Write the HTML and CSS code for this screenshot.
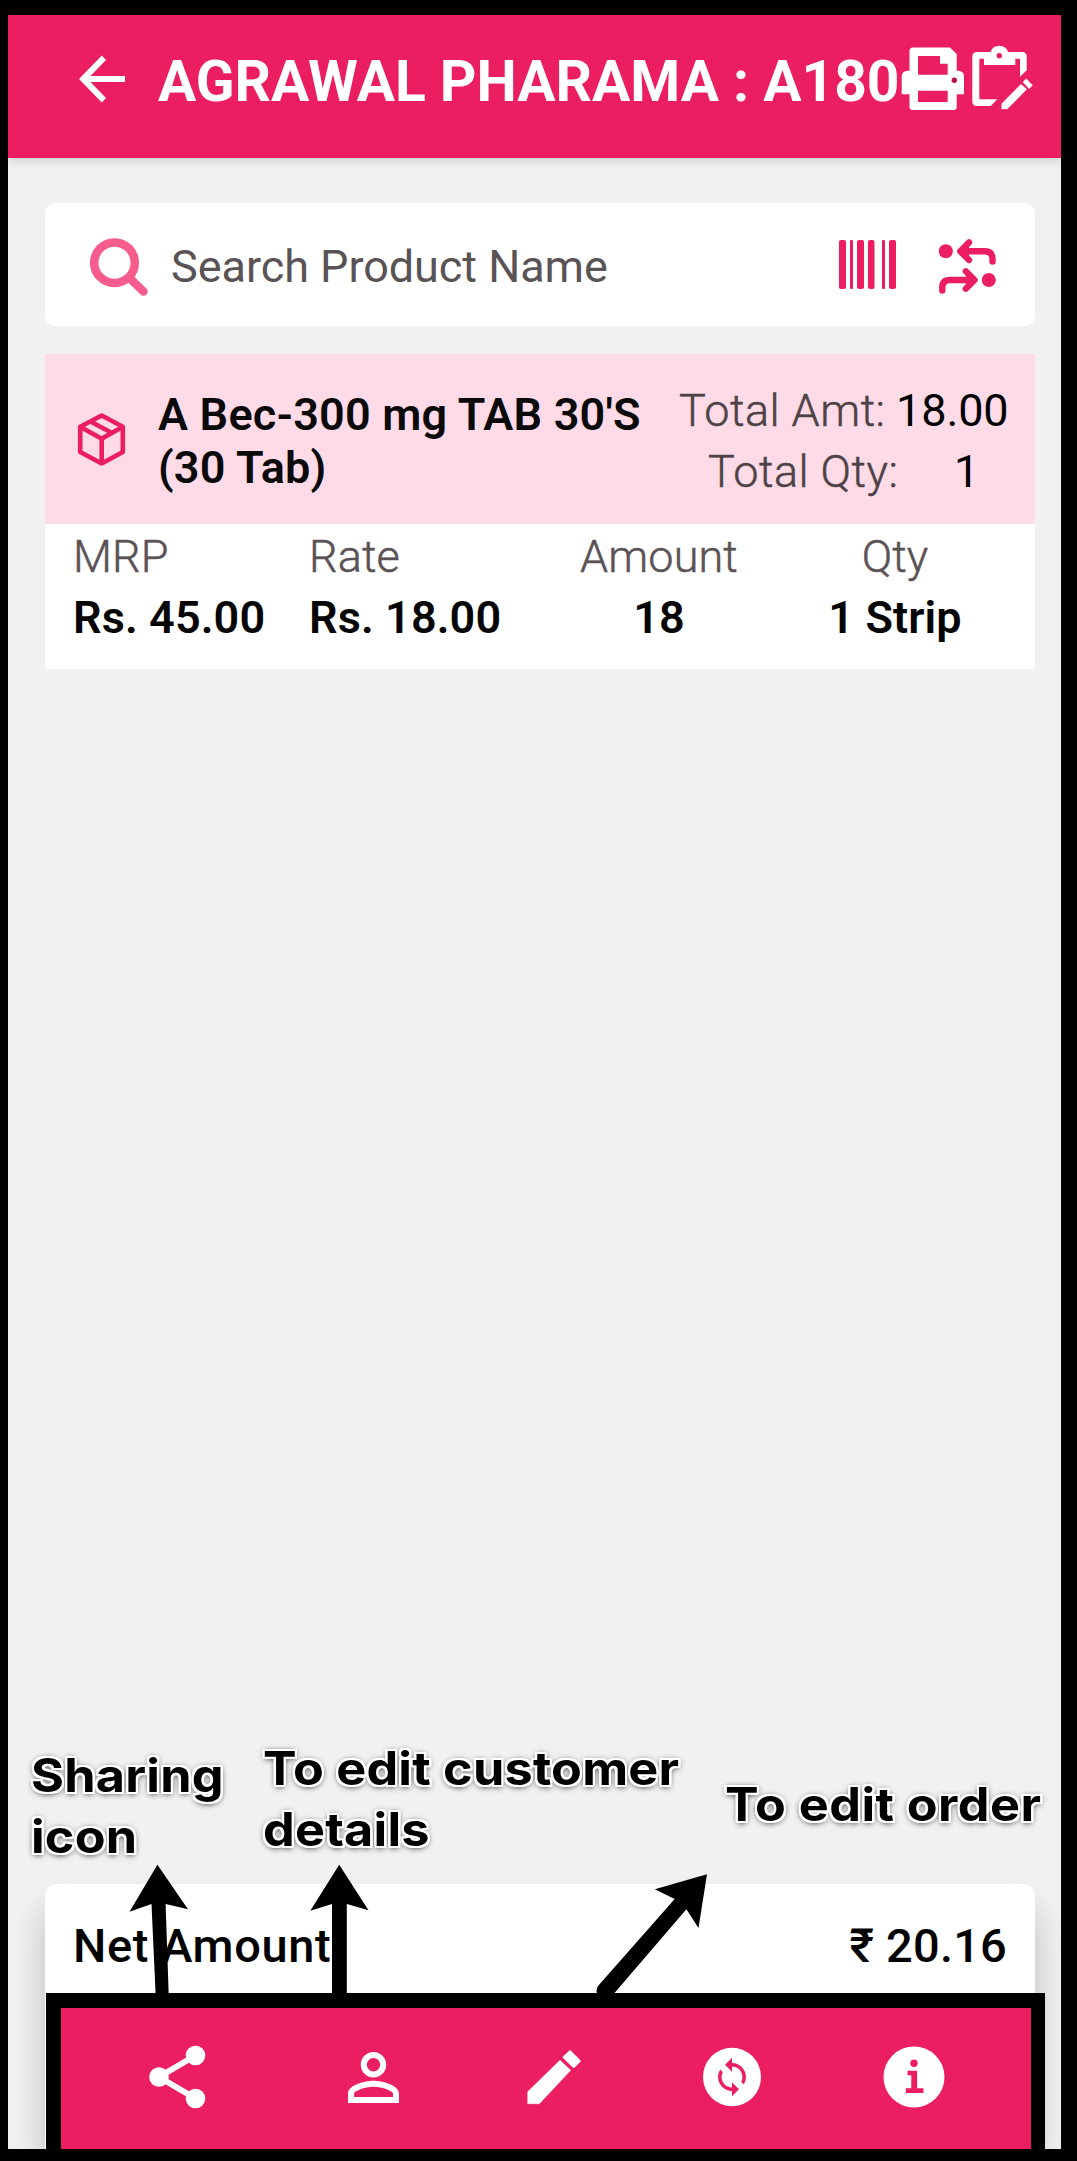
FILE: index.html
```
<!DOCTYPE html>
<html lang="en">
<head>
<meta charset="utf-8">
<title>Order details</title>
<link rel="stylesheet" href="styles.css">
</head>
<body>
<div class="frame">
  <div class="screen">
    <header class="topbar">
      <svg class="back" viewBox="79 55 46 48" width="46" height="48"><path d="M125 76v6H90.500L106 98l-4.200 4.500L79 79l22.800-23.500L106 60 90.500 76z" fill="#fff"/></svg>
      <h1 class="title">AGRAWAL PHARAMA : A180</h1>
      <svg class="print" viewBox="901 46 64 65" width="64" height="65">
        <path fill="#fff" fill-rule="evenodd" d="M913 47.500h37l6.700 6.500v16.700h1.300q6 0 6 6v17.600h-7.300V107q0 3-3 3H913q-3.500 0-3.500-3V94.300h-7.800V77q0-6.300 6.300-6.300h1.500V51q0-3.500 3.500-3.500zM918 56v18.700h29.700v-11H940V56zM918 90.700V102h29.700V90.700z"/>
        <circle cx="954.3" cy="80.300" r="2.700" fill="#b5124a"/>
      </svg>
      <svg class="clip" viewBox="972 44 62 66" width="62" height="66">
        <path fill="#fff" fill-rule="evenodd" d="M977 51h13.500a9.300 9.300 0 0 1 17.600 0H1022q4.700 0 4.700 4.500v13.800l-6.700 6.400v-18h-4.700V64H984v-6.300h-4.700v40.600h18l-6.600 6.700H977q-4.700 0-4.700-4.500v-45Q972.300 51 977 51zM999.300 52a2.700 2.700 0 1 0 0 5.400 2.700 2.700 0 0 0 0-5.400z"/>
        <path fill="#fff" d="M1001.700 102.700l19.300-19.400 5.700 5-19.400 19.700h-5.600zM1022.900 80.900l3.300-3.200 6.300 6.600-3.400 3.400z" stroke="#fff" stroke-width=".4"/>
      </svg>
    </header>

    <main class="content">
      <div class="search">
        <svg class="glass" viewBox="90 237 60 60" width="60" height="60" fill="none" stroke="#f65c8c"><circle cx="114.500" cy="262.700" r="20.300" stroke-width="8.500"/><path d="M131 279.500l12.500 12" stroke-width="8.500" stroke-linecap="round"/></svg>
        <span class="placeholder">Search Product Name</span>
        <svg viewBox="839 240 57 49" width="57" height="49" fill="#ec1e62"><rect x="839" y="240" width="7" height="49" rx="2"/><rect x="850" y="240" width="3" height="49" rx="1"/><rect x="857" y="240" width="7" height="49" rx="2"/><rect x="868" y="240" width="6.500" height="49" rx="2"/><rect x="882" y="240" width="3" height="49" rx="1"/><rect x="889" y="240" width="7" height="49" rx="2"/></svg>
        <svg class="swap" viewBox="938 237 60 58" width="60" height="58" fill="none" stroke="#ec1e62" stroke-width="6.400" stroke-linecap="round" stroke-linejoin="round"><circle cx="945.800" cy="250.300" r="7" fill="#ec1e62" stroke="none"/><path d="M969 241.500l-8.700 8.800 8.700 8.700M962 250.300h23q7.500 0 7.500 7.700v2.500"/><path d="M960.300 250.300l8.700-8.800v17.500z" fill="#ec1e62" stroke="none"/><circle cx="988.800" cy="279" r="7" fill="#ec1e62" stroke="none"/><path d="M965.800 270.300l8.700 8.700-8.700 8.700M973 279h-23q-7.700 0-7.700 7.500v3"/><path d="M974.500 279l-8.700-8.700v17.400z" fill="#ec1e62" stroke="none"/></svg>
      </div>

      <section class="item">
        <div class="item-head">
          <svg class="box" viewBox="77 412 49 54" width="49" height="54" fill="none" stroke="#ec1e62" stroke-width="4.600" stroke-linejoin="round"><path d="M101.700 415.500l21.100 11.300V452l-21.100 11.500L80.200 452v-25.200zM80.200 426.800l21.500 12 21.100-12M101.700 438.800v24M90.500 421.500l21.500 11.500"/></svg>
          <h2 class="name">A Bec-300 mg TAB 30'S<br>(30 Tab)</h2>
          <dl class="totals">
            <dt>Total Amt:</dt><dd>18.00</dd>
            <dt class="qty-label">Total Qty:</dt><dd class="qty">1</dd>
          </dl>
        </div>
        <div class="figures">
          <div class="fig mrp"><span>MRP</span><b>Rs. 45.00</b></div>
          <div class="fig rate"><span>Rate</span><b>Rs. 18.00</b></div>
          <div class="fig amount"><span>Amount</span><b>18</b></div>
          <div class="fig strips"><span>Qty</span><b>1 Strip</b></div>
        </div>
      </section>
    </main>

    <footer class="summary">
      <div class="net"><span>Net Amount</span><span class="sum">₹ 20.16</span></div>
      <nav class="actions">
        <svg class="share" viewBox="149 2045 57 64" width="57" height="64" fill="#fff"><path d="M195.500 2055.500L159 2077l36.500 21.500" fill="none" stroke="#fff" stroke-width="6"/><circle cx="195.500" cy="2055.500" r="9.800"/><circle cx="159" cy="2077" r="9.800"/><circle cx="195.500" cy="2098.500" r="9.800"/></svg>
        <svg class="person" viewBox="4 4 16 16" width="51" height="51"><path fill="#fff" d="M12 5.900a2.100 2.100 0 1 1 0 4.200 2.100 2.100 0 0 1 0-4.200m0 9c2.970 0 6.100 1.460 6.100 2.100v1.100H5.900V17c0-.64 3.130-2.100 6.100-2.100M12 4C9.790 4 8 5.790 8 8s1.790 4 4 4 4-1.790 4-4-1.790-4-4-4zm0 9c-2.670 0-8 1.340-8 4v3h16v-3c0-2.660-5.330-4-8-4z"/></svg>
        <svg class="pencil" viewBox="527 2049 55 56" width="55" height="56" fill="#fff" stroke="#fff" stroke-linejoin="round"><path d="M527.700 2091.700l32.300-31.400 10.700 10-31.400 33.400h-11.600z" stroke-width=".5"/><path d="M563.700 2057.300l6.300-6 9.700 9.700-6 6z" stroke-width="2"/></svg>
        <svg class="sync" viewBox="703 2047 58 60" width="58" height="60"><ellipse cx="732" cy="2077" rx="29" ry="29.300" fill="#fff"/><path transform="translate(711.120 2056.120) scale(1.740)" fill="#ec1e62" d="M12 4V1L8 5l4 4V6c3.310 0 6 2.690 6 6 0 1.010-.25 1.970-.7 2.800l1.460 1.460C19.540 15.030 20 13.570 20 12c0-4.420-3.580-8-8-8zm0 14c-3.310 0-6-2.690-6-6 0-1.010.25-1.970.7-2.800L5.240 7.740C4.460 8.970 4 10.430 4 12c0 4.420 3.580 8 8 8v3l4-4-4-4v3z"/></svg>
        <svg class="info" viewBox="883 2046 62 62" width="62" height="62"><circle cx="914" cy="2077" r="30.500" fill="#fff"/><circle cx="914" cy="2063.300" r="3.700" fill="#ec1e62"/><path fill="#ec1e62" d="M907.500 2070.700h9.600v17.600h6.400v4.700h-17.700v-4.700h5.500v-13h-3.800z"/></svg>
      </nav>
    </footer>
  </div>

  <p class="note note-share">Sharing<br>icon</p>
  <p class="note note-customer">To edit customer<br>details</p>
  <p class="note note-order">To edit order</p>
  <svg class="arrows" viewBox="120 1855 600 160" width="600" height="160">
    <path d="M157.400 1864.700l30.600 44.600-22.400-5.300L169 2003q-6.500 10-13 0l-4.500-99-22 7.700z"/>
    <path d="M339.200 1864.700l29.300 45.500-21.700-6.200v92H332v-92l-21.700 6.700z"/>
    <path d="M707 1874.300l-8.500 53.700-12.100-18.700-73.600 85.700H598q-3-4 0-9l76.700-87-19.900-9.700z"/>
  </svg>
</div>
</body>
</html>
```
FILE: styles.css
```
* { box-sizing: border-box; margin: 0; padding: 0; }
body { font-family: Roboto, "Liberation Sans", sans-serif; }
svg { display: block; flex: none; }

.frame {
  position: relative;
  width: 1077px;
  height: 2161px;
  padding: 15px 16px 12px 8px;
  background: #000;
  overflow: hidden;
}
.screen {
  display: flex;
  flex-direction: column;
  height: 100%;
  background: #f1f1f1;
  overflow: hidden;
}

.topbar {
  display: flex;
  align-items: center;
  flex: none;
  height: 142.500px;
  padding: 0 27px 15px 71px;
  background: #ec1e62;
  box-shadow: 0 2px 10px rgba(0, 20, 15, .18);
}
.title {
  width: 743px;
  margin-left: 33px;
  padding-top: 6px;
  font-size: 57px;
  line-height: 60px;
  font-weight: 700;
  letter-spacing: -.03px;
  color: #fff;
  white-space: nowrap;
}
.clip { margin: -2px 0 0 7px; }

.content { flex: 1; padding: 45.500px 26px 0 37px; }
.search {
  display: flex;
  align-items: center;
  height: 123px;
  padding: 0 37px 0 45px;
  background: #fff;
  border-radius: 10px;
}
.glass { margin-top: 4px; }
.placeholder {
  flex: 1;
  margin-left: 21px;
  padding-top: 5px;
  font-size: 45px;
  line-height: 56px;
  letter-spacing: -.05px;
  color: #5a5356;
  white-space: nowrap;
}
.swap { margin: 4px 0 0 42px; }

.item { height: 315px; margin-top: 28px; background: #fff; }
.item-head {
  display: flex;
  align-items: center;
  height: 170px;
  padding: 0 30px 0 32px;
  background: #ffdbe7;
}
.box { margin-top: -1px; }
.name {
  flex: 1;
  margin-left: 32px;
  padding-top: 4px;
  font-size: 45px;
  line-height: 53px;
  font-weight: 600;
  letter-spacing: .2px;
  color: #0a0a0a;
  white-space: nowrap;
}
.totals {
  display: grid;
  grid-template-columns: 217px 109px;
  padding-top: 4px;
  font-size: 45px;
  line-height: 61px;
  white-space: nowrap;
}
.totals dt { font-weight: 300; letter-spacing: .5px; color: #4d4246; -webkit-text-stroke: .5px #4d4246; }
.totals .qty-label { padding-left: 29px; }
.totals dd { color: #000; letter-spacing: -.1px; }
.totals .qty { padding-left: 58px; }

.figures {
  display: flex;
  padding: 2px 0 0 28px;
  font-size: 45px;
  line-height: 61px;
  white-space: nowrap;
}
.fig { display: flex; flex-direction: column; }
.fig span { font-weight: 300; color: #5a5255; -webkit-text-stroke: .5px #5a5255; letter-spacing: .1px; }
.fig b { font-weight: 600; color: #050505; letter-spacing: .1px; }
.mrp, .rate { width: 236px; }
.amount { width: 300px; margin-left: -36px; align-items: center; }
.strips { width: 170px; margin-left: 1px; align-items: center; }

.summary {
  flex: none;
  width: 990px;
  height: 265px;
  margin-left: 37px;
  background: #fff;
  border-radius: 12px 12px 0 0;
  box-shadow: 0 26px 34px rgba(20, 30, 30, .24);
}
.net {
  display: flex;
  justify-content: space-between;
  height: 109px;
  padding: 32px 28px 0 28px;
  font-size: 47px;
  line-height: 60px;
  font-weight: 500;
  letter-spacing: .6px;
  color: #000;
}
.sum { letter-spacing: .2px; }
.actions {
  display: flex;
  align-items: center;
  width: 999px;
  height: 156px;
  margin-left: 1px;
  padding: 0 0 3px 88px;
  border: solid #000;
  border-width: 15px 14px 0 15px;
  background: #ec1e62;
}
.person { margin-left: 142px; }
.pencil { margin-left: 128px; }
.sync { margin-left: 121px; }
.info { margin-left: 122px; }

/* callouts laid over the app screen */
.note {
  position: absolute;
  font: 700 46px/61px Inter, "Liberation Sans", sans-serif;
  letter-spacing: .2px;
  transform: scaleX(1.095);
  transform-origin: 0 0;
  color: #000;
  white-space: nowrap;
  text-shadow: 2px 0 #fff, -2px 0 #fff, 0 2px #fff, 0 -2px #fff,
    2px 2px #fff, -2px -2px #fff, 2px -2px #fff, -2px 2px #fff,
    0 2px 6px rgba(0, 0, 0, .7), 0 0 6px rgba(0, 0, 0, .5);
}
.note-share { left: 31px; top: 1745px; }
.note-customer { left: 263px; top: 1738px; }
.note-order { left: 725px; top: 1774px; letter-spacing: .4px; }
.arrows { position: absolute; left: 120px; top: 1855px; }
```
